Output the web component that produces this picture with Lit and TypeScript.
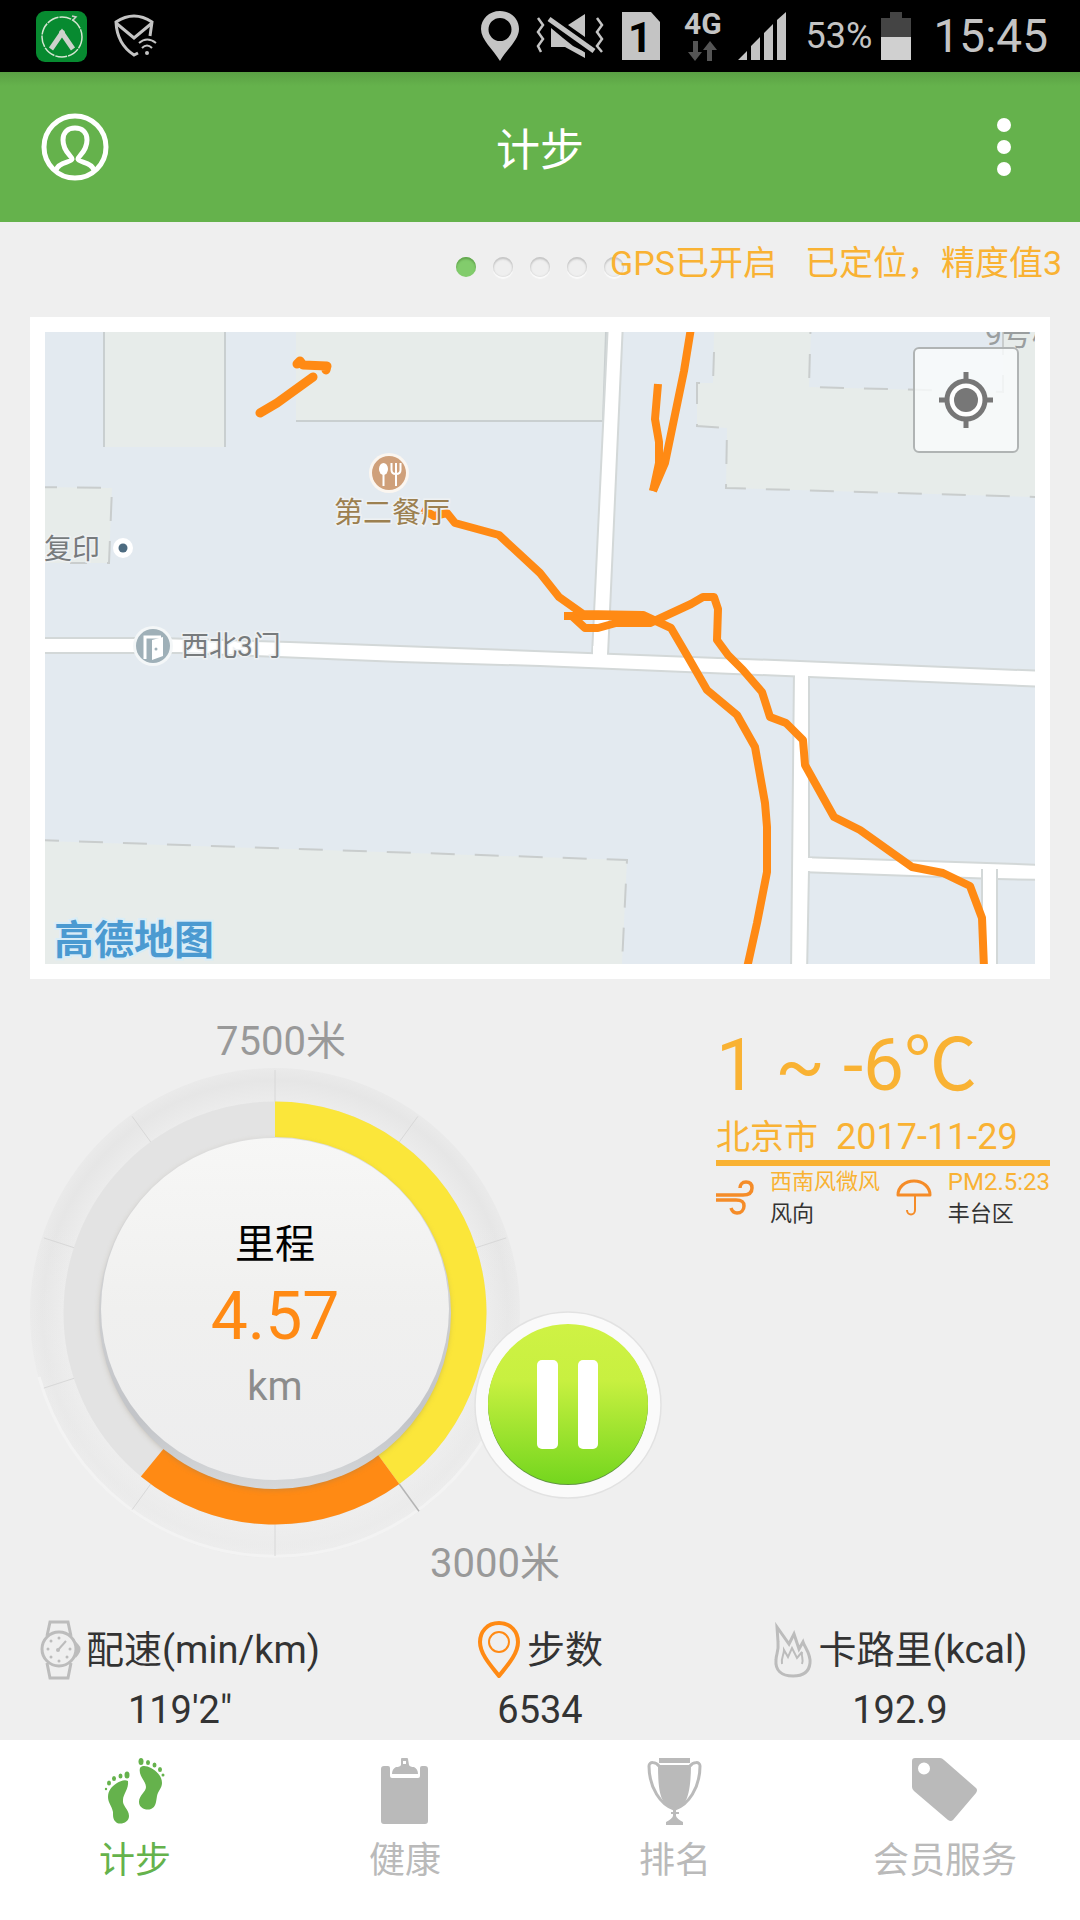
import { LitElement, html, svg, css } from "lit";
import { customElement, property, state } from "lit/decorators.js";
import { classMap } from "lit/directives/class-map.js";

/* Street map with the recorded walking route. */
@customElement("route-map")
class RouteMap extends LitElement {
  static styles = css`
    :host {
      display: block;
      position: relative;
    }
    .canvas {
      display: block;
      width: 100%;
      height: auto;
    }
    .land { fill: #e3eaf0; }
    .plot { fill: #e7ecea; }
    .edge { fill: none; stroke: #c9cfd0; stroke-width: 2; }
    .dashed { fill: none; stroke: #c9cdcd; stroke-width: 2; stroke-dasharray: 24 20; }
    .road { fill: #fff; stroke: #d3d8d8; stroke-width: 2; }
    .join { fill: #fff; }
    .track {
      fill: none;
      stroke: #ff8a14;
      stroke-width: 8;
      stroke-linejoin: round;
    }
    .blob { stroke-width: 9; stroke-linecap: round; }
    .label {
      font-size: 28px;
      fill: #777b7d;
      stroke: #eef1f3;
      stroke-width: 3;
      paint-order: stroke;
    }
    .food { font-size: 29px; fill: #9c8050; }
    .thin { font-size: 30px; stroke: none; fill: #9a9e9f; }
    .brand {
      font-size: 40px;
      font-weight: 700;
      fill: #4b9ad1;
      stroke: #d8edf8;
      stroke-width: 4;
      paint-order: stroke;
    }
    .locate {
      position: absolute;
      top: 15px;
      right: 16px;
      width: 106px;
      height: 106px;
      padding: 0;
      display: grid;
      place-items: center;
      background: rgba(250, 253, 252, 0.8);
      border: 2px solid #b0b4b4;
      border-radius: 6px;
    }
  `;

  render() {
    return html`
      <svg class="canvas" viewBox="45 332 990 632" role="img" aria-label="路线地图">
        <rect class="land" x="45" y="332" width="990" height="632"></rect>
        <rect class="plot" x="104" y="332" width="121" height="115"></rect>
        <path class="edge" d="M104 332V447M225 332V447"></path>
        <path class="plot" d="M296 332H606L603 421H296z"></path>
        <path class="edge" d="M296 421H603L606 332"></path>
        <path class="plot" d="M45 487L112 488L109 563L45 563z"></path>
        <path class="dashed" d="M33 487L112 488L109 563L70 563"></path>
        <path class="plot" d="M45 841L627 860L622 964H45z"></path>
        <path class="dashed" d="M35 840L627 860L622 964"></path>
        <path class="plot" d="M714 332L713 383H697V426L727 428L726 488L1035 497V332z"></path>
        <path class="land" d="M811 332L809 387L1003 392V332z"></path>
        <path class="dashed" d="M714 352L713 383H697V426L727 428L726 488L1035 497"></path>
        <path class="dashed" d="M811 310L809 387L1003 392V332"></path>

        <path class="road" d="M608 322H623L608 655H592z"></path>
        <path class="road" d="M800 857L1045 865V880L997 879L800 872z"></path>
        <path class="road" d="M982 870H997V974H982z"></path>
        <path class="road" d="M794 670H809V870L807 974H791z"></path>
        <path
          class="road"
          d="M35 638L160 638L290 642L588 653L800 661L1045 671V687L809 677L540 666L400 662L180 653H35z"
        ></path>
        <path class="join" d="M593 646H607V660H593zM795 670H808V684H795zM800 858H812V871H800zM983 866H996V884H983z"></path>

        <path class="track blob" d="M297 364L300 361L303 365L327 366L326 370"></path>
        <path class="track blob" d="M313 377L277 403L260 413"></path>
        <path class="track" d="M658 384L655 419L659 442V463L653 491"></path>
        <path class="track" d="M653 491L665 463L678 400L684 371L691 328"></path>
        <path class="track" d="M422 509L434 516L447 513L455 523L499 535L540 573L559 597L583 614L643 615L671 628L688 657L707 690L737 715L755 747L765 803L767 827V872L757 923L747 968"></path>
        <path class="track" d="M564 616H640L652 621"></path>
        <path class="track" d="M573 617L585 628H598L616 623H650L691 604L703 597H714L718 609L717 640L728 655L743 670L762 692L770 717L786 723L803 740L805 765L834 817L860 830L912 867L943 873L970 886L982 918L984 968"></path>

        <circle cx="389" cy="473" r="20" fill="#fbf6f0"></circle>
        <circle cx="389" cy="473" r="17" fill="#cfa07a"></circle>
        <path
          d="M383.500 474V486M396 473V486M391.500 463V470Q391.500 474 396 474Q400.500 474 400.500 470V463M396 463V473"
          fill="none" stroke="#fff" stroke-width="2"
        ></path>
        <ellipse cx="383.500" cy="469" rx="4.500" ry="6" fill="#fff"></ellipse>

        <circle cx="123" cy="548" r="10" fill="#fff"></circle>
        <circle cx="123" cy="548" r="4.500" fill="#4d6b80"></circle>

        <circle cx="153" cy="646" r="20" fill="#f4f7f8"></circle>
        <circle cx="153" cy="646" r="17" fill="#9fb0b8"></circle>
        <path d="M145 659V637H161" fill="none" stroke="#fff" stroke-width="3"></path>
        <path d="M152 640L163 637V656L152 660z" fill="#fff"></path>
        <circle cx="156" cy="649" r="1.500" fill="#9fb0b8"></circle>

        <text class="label food" x="334" y="523">第二餐厅</text>
        <text class="label" x="44" y="559">复印</text>
        <text class="label" x="181" y="656">西北3门</text>
        <text class="label thin" x="985" y="345">9号楼</text>
        <text class="brand" x="54" y="954">高德地图</text>
      </svg>
      <button class="locate" type="button" aria-label="定位">
        <svg width="56" height="56" viewBox="0 0 56 56">
          <path d="M28 0V10M28 46V56M1 28H10M46 28H55" stroke="#777" stroke-width="5"></path>
          <circle cx="28" cy="28" r="19" fill="#fff" stroke="#777" stroke-width="5"></circle>
          <circle cx="28" cy="28" r="12" fill="#777"></circle>
        </svg>
      </button>
    `;
  }
}

/* Circular distance gauge, one full turn being the daily goal. */
@customElement("distance-dial")
class DistanceDial extends LitElement {
  @property({ type: Number }) distance = 0;
  @property({ type: Number }) goal = 7500;
  @property({ type: Number }) mark = 3000;

  static styles = css`
    :host { display: block; }
    .goal {
      padding: 40px 0 2px 12px;
      font-size: 40px;
      line-height: 46px;
      text-align: center;
      color: #999;
    }
    .dial {
      position: relative;
      display: grid;
      place-items: center;
      width: 488px;
    }
    .face, .readout { grid-area: 1 / 1; }
    .face { display: block; width: 100%; height: auto; overflow: visible; }
    .readout {
      display: flex;
      flex-direction: column;
      align-items: center;
      padding-top: 8px;
      font-size: 40px;
      line-height: 64px;
    }
    .name { color: #000; }
    .value { font-size: 66px; line-height: 80px; color: #ff8a14; }
    .unit { color: #8c8c8c; line-height: 60px; }
    .mark {
      position: absolute;
      left: 399px;
      bottom: -32px;
      font-size: 40px;
      line-height: 46px;
      white-space: nowrap;
      color: #999;
    }
    .pause {
      position: absolute;
      left: 443px;
      top: 244px;
      width: 188px;
      height: 188px;
      padding: 0;
      border: 0;
      border-radius: 50%;
      background: none;
    }
    .disc { display: block; }
  `;

  private point(deg: number, r: number) {
    const a = (deg * Math.PI) / 180;
    return `${244 + r * Math.sin(a)} ${246 - r * Math.cos(a)}`;
  }

  private arc(from: number, to: number) {
    const large = to - from > 180 ? 1 : 0;
    return `M${this.point(from, 191)}A191 191 0 ${large} 1 ${this.point(to, 191)}`;
  }

  render() {
    const split = (this.mark / this.goal) * 360;
    const end = ((this.distance * 1000) / this.goal) * 360;
    const ticks = [0, 36, 72, 180, 216, 252, 288, 324];
    return html`
      <div class="goal">${this.goal}米</div>
      <div class="dial">
        <svg class="face" viewBox="0 0 488 488">
          <defs>
            <radialGradient id="rim">
              <stop offset="0.860" stop-color="#ececec"></stop>
              <stop offset="0.950" stop-color="#e6e6e6"></stop>
              <stop offset="1" stop-color="#eaeaea"></stop>
            </radialGradient>
            <linearGradient id="fade" x1="0" y1="0" x2="0" y2="1">
              <stop offset="0.300" stop-color="#f0f0f0" stop-opacity="0"></stop>
              <stop offset="1" stop-color="#f0f0f0" stop-opacity="0.600"></stop>
            </linearGradient>
            <linearGradient id="cap" x1="0" y1="0" x2="0" y2="1">
              <stop offset="0" stop-color="#f7f7f6"></stop>
              <stop offset="0.500" stop-color="#f0f0ef"></stop>
              <stop offset="1" stop-color="#ededee"></stop>
            </linearGradient>
            <linearGradient id="bevel" x1="0" y1="0" x2="0" y2="1">
              <stop offset="0" stop-color="#dedede"></stop>
              <stop offset="0.800" stop-color="#c2c4c8"></stop>
              <stop offset="1" stop-color="#d6d8da"></stop>
            </linearGradient>
            <filter id="soft" x="-10%" y="-10%" width="120%" height="120%">
              <feGaussianBlur stdDeviation="3"></feGaussianBlur>
            </filter>
          </defs>
          <circle cx="244" cy="246" r="245" fill="url(#rim)"></circle>
          <circle cx="244" cy="246" r="245" fill="url(#fade)"></circle>
          <path d="M8 310A245 245 0 0 0 480 310" fill="none" stroke="#f3f3f3" stroke-width="3"></path>
          ${ticks.map(
            (t) => svg`<path d="M${this.point(t, 211)}L${this.point(t, 243)}" stroke="#d8d8d8" stroke-width="1"></path>`
          )}
          <path d="M${this.point(split, 211)}L${this.point(split, 245)}" stroke="#b4b4b4" stroke-width="1.500"></path>
          <circle cx="244" cy="246" r="191" fill="none" stroke="#e3e3e3" stroke-width="41"></circle>
          <path d=${this.arc(0, split)} fill="none" stroke="#fbe63a" stroke-width="41"></path>
          <path d=${this.arc(split, end)} fill="none" stroke="#ff8a14" stroke-width="41"></path>
          <circle cx="244" cy="248" r="174" fill="#8a7a60" opacity="0.500" filter="url(#soft)"></circle>
          <circle cx="244" cy="246" r="176" fill="url(#bevel)"></circle>
          <ellipse cx="244" cy="242" rx="174" ry="171" fill="url(#cap)"></ellipse>
        </svg>
        <div class="readout">
          <span class="name">里程</span>
          <span class="value">${this.distance}</span>
          <span class="unit">km</span>
        </div>
        <span class="mark">${this.mark}米</span>
        <button class="pause" type="button" aria-label="暂停">
          <svg class="disc" width="188" height="188" viewBox="0 0 188 188">
            <defs>
              <linearGradient id="lime" x1="0" y1="0" x2="0" y2="1">
                <stop offset="0" stop-color="#cff244"></stop>
                <stop offset="0.350" stop-color="#c8f040"></stop>
                <stop offset="1" stop-color="#74d61e"></stop>
              </linearGradient>
            </defs>
            <circle cx="94" cy="94" r="93" fill="#fafafa" stroke="#e2e2e2" stroke-width="1.500"></circle>
            <circle cx="94" cy="94" r="80" fill="#5f9440"></circle>
            <circle cx="94" cy="93" r="80" fill="url(#lime)"></circle>
            <rect x="63" y="49" width="21" height="89" rx="5" fill="#fff"></rect>
            <rect x="104" y="49" width="20" height="89" rx="5" fill="#fff"></rect>
          </svg>
        </button>
      </div>
    `;
  }
}

/* Temperature, city, date, wind and air quality. */
@customElement("weather-panel")
class WeatherPanel extends LitElement {
  static styles = css`
    :host {
      display: block;
      width: 334px;
      padding-top: 44px;
      color: #f9b233;
    }
    .temp { font-size: 73px; line-height: 84px; white-space: nowrap; }
    .place {
      display: flex;
      gap: 18px;
      margin-top: 7px;
      font-size: 36px;
      line-height: 46px;
      border-bottom: 6px solid #f9b233;
    }
    .city { font-size: 34px; }
    .facts { display: flex; justify-content: space-between; }
    .fact { display: flex; align-items: center; gap: 16px; }
    .text {
      display: flex;
      flex-direction: column;
      font-size: 22px;
      line-height: 32px;
      white-space: nowrap;
    }
    .number { font-size: 24px; }
    .what { color: #333; }
  `;

  render() {
    return html`
      <div class="temp">1 ~ -6℃</div>
      <div class="place"><span class="city">北京市</span><time datetime="2017-11-29">2017-11-29</time></div>
      <div class="facts">
        <div class="fact">
          <svg width="38" height="36" viewBox="0 0 38 36" fill="none" stroke="#f58c28" stroke-width="3.500">
            <path d="M0 15H27C34 15 36 12 36 8C36 4 34 2 30 2C26 2 24 5 24 8"></path>
            <path d="M0 20H20C26 20 28 22 28 26C28 30 25 33 21 33C18 33 16 31 15 28"></path>
          </svg>
          <div class="text"><span>西南风微风</span><span class="what">风向</span></div>
        </div>
        <div class="fact">
          <svg width="36" height="38" viewBox="0 0 36 38" fill="none" stroke="#f58c28">
            <path d="M2 16C2 8 9 2 18 2S34 8 34 16z" stroke-width="3" stroke-linejoin="round"></path>
            <path d="M19 16V31C19 37 11 37 11 31" stroke-width="2"></path>
          </svg>
          <div class="text"><span class="number">PM2.5:23</span><span class="what">丰台区</span></div>
        </div>
      </div>
    `;
  }
}

const watchIcon = html`<svg width="42" height="60" viewBox="0 0 42 60" fill="none" stroke="#bcbcbc" stroke-width="3">
  <path d="M7 16L10 2H28L31 16M7 43L10 58H28L31 43"></path>
  <circle cx="19" cy="29" r="17"></circle>
  <path d="M37 25Q41 29 37 34z" fill="#bcbcbc"></path>
  <path d="M18 30L26 21" stroke-width="2"></path>
  <g fill="#bcbcbc" stroke="none">
    <circle cx="19" cy="18" r="1.500"></circle><circle cx="19" cy="41" r="1.500"></circle>
    <circle cx="8" cy="29" r="1.500"></circle><circle cx="30" cy="29" r="1.500"></circle>
    <circle cx="11" cy="21" r="1.500"></circle><circle cx="11" cy="37" r="1.500"></circle>
    <circle cx="27" cy="37" r="1.500"></circle><circle cx="18" cy="30" r="2"></circle>
  </g>
</svg>`;

const pinIcon = html`<svg width="46" height="60" viewBox="0 0 46 60" fill="none" stroke="#ff8a14">
  <path d="M22 3C10 3 3 12 3 22C3 35 16 48 22 56C28 48 41 35 41 22C41 12 34 3 22 3z" stroke-width="4" stroke-linejoin="round"></path>
  <circle cx="22" cy="22" r="10" stroke-width="2"></circle>
</svg>`;

const flameIcon = html`<svg width="42" height="60" viewBox="0 0 42 60" fill="none" stroke="#bcbcbc" stroke-linejoin="miter">
  <path d="M4 7L16 24L21 14L26 29L30 22C32 28 38 34 37 43C36 53 28 56 20 56C8 56 2 50 3 40C3 34 6 32 5 22z" stroke-width="3"></path>
  <path d="M9 44C8 37 11 35 11 30L15 37L19 28L24 38L29 32C28 37 31 39 29 44" stroke-width="2"></path>
</svg>`;

const feetIcon = html`<svg width="62" height="67" viewBox="0 0 62 67" fill="currentColor">
  <path d="M24 23C21 21 16 23 13 25C7 29 4 33 4 39C4 45 8 48 9 54C9 59 9 62 13 65C18 67 25 64 25 58C25 51 18 48 19 42C19 36 25 31 24 23z"></path>
  <ellipse cx="23" cy="17" rx="2.500" ry="3.500"></ellipse><ellipse cx="16.500" cy="18" rx="2" ry="2.500"></ellipse>
  <ellipse cx="10" cy="20.500" rx="2" ry="2.500"></ellipse><ellipse cx="5" cy="25" rx="2" ry="2.500"></ellipse><circle cx="2" cy="31" r="1.200"></circle>
  <path d="M36 10C38 7 43 8 47 10C54 14 58 19 58 25C58 30 54 33 53 38C52 44 52 49 47 51C42 53 35 50 35 44C35 37 42 34 42 29C42 23 34 18 36 10z"></path>
  <ellipse cx="37" cy="3.500" rx="2.500" ry="3.500"></ellipse><ellipse cx="44" cy="4.500" rx="2" ry="2.500"></ellipse>
  <ellipse cx="50.500" cy="7" rx="2" ry="2.500"></ellipse><ellipse cx="56" cy="11.500" rx="2" ry="2.500"></ellipse><circle cx="59" cy="17" r="1.500"></circle>
</svg>`;

const boardIcon = html`<svg width="48" height="67" viewBox="0 0 48 67" fill="currentColor">
  <path d="M3 8H7Q9 8 9 10V18Q9 20 11 20H37Q39 20 39 18V10Q39 8 41 8H44Q47 8 47 11V63Q47 66 44 66H3Q0 66 0 63V11Q0 8 3 8z"></path>
  <path fill-rule="evenodd" d="M20 1Q20 0 21 0H26Q27 0 27 1L28 7Q29 9 33 9Q37 11 37 16H11Q11 11 15 9Q19 9 20 7zM22 3V6H25V3z"></path>
</svg>`;

const cupIcon = html`<svg width="56" height="67" viewBox="0 0 56 67" fill="currentColor">
  <path d="M12 0H43V5H12zM11 7H44C44 24 42 38 38 44Q33 50 29 51V58H26V51Q20 48 17 44C12 38 11 24 11 7z"></path>
  <path d="M12 8C9 4 2 3 2 8C2 30 14 47 27 51M43 8C46 4 53 3 53 8C53 30 41 47 28 51" fill="none" stroke="currentColor" stroke-width="3"></path>
  <path d="M24 54H32V56H24zM26 58H29Q30 61 36 64V67H19V64Q25 61 26 58z"></path>
</svg>`;

const tagIcon = html`<svg width="66" height="67" viewBox="0 0 66 67" fill="currentColor">
  <path fill-rule="evenodd" d="M3 0H28Q30 0 32 2L64 30Q66 32 64 35L41 62Q39 64 36 62L2 33Q0 31 0 29V3Q0 0 3 0zM12 4.500A6 6 0 1 0 12 16.500A6 6 0 1 0 12 4.500z"></path>
</svg>`;

@customElement("app-root")
class AppRoot extends LitElement {
  @state() private tab = 0;
  @state() private page = 0;

  private stats = [
    { icon: watchIcon, name: "配速(min/km)", value: "119'2\"" },
    { icon: pinIcon, name: "步数", value: "6534" },
    { icon: flameIcon, name: "卡路里(kcal)", value: "192.9" },
  ];

  private tabs = [
    { icon: feetIcon, name: "计步" },
    { icon: boardIcon, name: "健康" },
    { icon: cupIcon, name: "排名" },
    { icon: tagIcon, name: "会员服务" },
  ];

  static styles = css`
    :host {
      display: flex;
      flex-direction: column;
      min-height: 100vh;
      background: #efefef;
      font-family: Roboto, "Noto Sans CJK SC", sans-serif;
      color: #333;
    }
    .status {
      display: flex;
      align-items: center;
      gap: 16px;
      height: 72px;
      padding: 0 32px 0 36px;
      background: #000;
      color: #c4c4c4;
    }
    .notes { display: flex; align-items: center; gap: 27px; margin-right: auto; }
    .net {
      display: flex;
      flex-direction: column;
      align-items: center;
      gap: 4px;
      margin-left: 8px;
      font-size: 30px;
      line-height: 26px;
      font-weight: 700;
    }
    .power {
      display: flex;
      align-items: center;
      gap: 9px;
      margin-left: 4px;
      font-size: 36px;
    }
    .clock { margin-left: 6px; font-size: 46px; }
    .header {
      display: grid;
      grid-template-columns: 1fr auto 1fr;
      align-items: center;
      height: 150px;
      padding: 0 40px;
      background: linear-gradient(#5aa044, #65b24c 14px);
      color: #fff;
    }
    .title { margin: 0; font-size: 44px; font-weight: 400; }
    .tool {
      padding: 0;
      border: 0;
      background: none;
      color: inherit;
      justify-self: start;
      display: grid;
    }
    .more { justify-self: end; padding: 0 28px; }
    .pager { display: grid; align-items: center; height: 95px; }
    .dots {
      grid-area: 1 / 1;
      justify-self: center;
      display: flex;
      gap: 17px;
      padding-bottom: 6px;
    }
    .dot {
      width: 20px;
      height: 20px;
      padding: 0;
      border: 0;
      border-radius: 50%;
      background: #efefef;
      box-shadow: inset 0 2px 2px #c4c4c4, inset 0 0 2px #ccc, 0 2px 1px #fafafa;
    }
    .on { background: #82cc6c; box-shadow: inset 0 2px 2px #62a44e; }
    .gps {
      grid-area: 1 / 1;
      justify-self: end;
      display: flex;
      gap: 28px;
      padding: 0 18px 14px;
      font-size: 34px;
      line-height: 40px;
      color: #f9b233;
      z-index: 1;
    }
    .card { margin: 0 30px; padding: 15px; background: #fff; }
    .today {
      display: flex;
      justify-content: space-between;
      padding: 0 30px 65px 31px;
    }
    .stats { display: grid; grid-template-columns: repeat(3, 1fr); margin: 0; }
    .stat { display: flex; flex-direction: column; align-items: center; }
    .name {
      display: flex;
      align-items: center;
      gap: 4px;
      height: 60px;
      font-size: 38px;
      line-height: 44px;
      white-space: nowrap;
    }
    .value { margin: 0; font-size: 38px; line-height: 60px; }
    .tabs {
      display: grid;
      grid-template-columns: repeat(4, 1fr);
      min-height: 180px;
      margin-top: auto;
      background: #fff;
    }
    .tab {
      display: flex;
      flex-direction: column;
      align-items: center;
      gap: 12px;
      padding-top: 18px;
      font-size: 36px;
      line-height: 48px;
      color: #bababa;
      text-decoration: none;
    }
    .active { color: #65b24c; }
  `;

  private renderStatus() {
    return html`
      <div class="status">
        <div class="notes">
          <svg width="51" height="51" viewBox="0 0 51 51">
            <rect width="51" height="51" rx="9" fill="#078a30"></rect>
            <circle cx="26" cy="26" r="20" fill="none" stroke="#d5e6d2" stroke-width="1.500" stroke-dasharray="12 1"></circle>
            <path d="M15 38L26 22L37 38" fill="none" stroke="#cdd2cc" stroke-width="5"></path>
            <circle cx="26" cy="22" r="3" fill="#cdd2cc"></circle>
            <path d="M36 5L40 6L37 9" fill="none" stroke="#cdd2cc" stroke-width="1.500"></path>
          </svg>
          <svg width="44" height="44" viewBox="0 0 44 44" fill="none" stroke="#c4c4c4" stroke-width="3">
            <path d="M24 39L20 41Q3 30 2 8Q20 -4 38 8L36 22"></path>
            <path d="M2 9L20 24L38 9"></path>
            <path d="M28 34Q33 29 38 34M25 29Q33 22 42 29" stroke-width="2"></path>
            <circle cx="33" cy="39" r="2" fill="#c4c4c4" stroke="none"></circle>
          </svg>
        </div>
        <svg width="38" height="50" viewBox="0 0 38 50" fill="#c4c4c4">
          <path fill-rule="evenodd" d="M19 0C8 0 0 8 0 18C0 29 12 38 19 50C26 38 38 29 38 18C38 8 30 0 19 0zM19 7A11.500 11.500 0 1 1 19 30A11.500 11.500 0 1 1 19 7z"></path>
        </svg>
        <svg width="71" height="44" viewBox="0 0 71 44" fill="#c4c4c4">
          <path d="M33 11L50 0V23zM16 14L28 24L38 32L50 38V44L30 33H16z"></path>
          <path d="M13 5L59 39" stroke="#000" stroke-width="10"></path>
          <path d="M14 5L59 37" stroke="#c4c4c4" stroke-width="5"></path>
          <path d="M3 4L8 11L3 18L8 25L3 32L6 38M62 4L67 11L62 18L67 25L62 32L67 38" fill="none" stroke="#c4c4c4" stroke-width="2.500"></path>
        </svg>
        <svg width="38" height="48" viewBox="0 0 38 48">
          <path d="M0 0H29L38 10V48H0z" fill="#c4c4c4"></path>
          <text x="18" y="40" text-anchor="middle" font-size="42" font-weight="700" fill="#000">1</text>
        </svg>
        <div class="net">
          <span>4G</span>
          <svg width="30" height="20" viewBox="0 0 30 20" fill="#555">
            <path d="M5 0H10V11H14L7 20L0 11H5zM19 20H24V9H29L22 0L15 9H19z"></path>
          </svg>
        </div>
        <svg width="48" height="48" viewBox="0 0 48 48" fill="#c4c4c4">
          <path d="M0 48L9 39V48zM13 48V34L22 25V48zM26 48V21L35 12V48zM39 48V8L48 0V48z"></path>
        </svg>
        <div class="power">
          <span>53%</span>
          <svg width="30" height="48" viewBox="0 0 30 48">
            <path d="M9 0H21V6H30V25H0V6H9z" fill="#444"></path>
            <path d="M0 25H30V48H0z" fill="#d0d0d0"></path>
          </svg>
        </div>
        <span class="clock">15:45</span>
      </div>
    `;
  }

  render() {
    return html`
      ${this.renderStatus()}
      <header class="header">
        <button class="tool" type="button" aria-label="个人中心">
          <svg width="70" height="70" viewBox="0 0 70 70" fill="none" stroke="#fff" stroke-width="5">
            <circle cx="35" cy="35" r="31"></circle>
            <path d="M16 58C19 49 31 51 32 47C32 44 23 40 23 28C23 20 28 16 35 16S47 20 47 28C47 40 38 44 38 47C39 51 51 49 54 58"></path>
          </svg>
        </button>
        <h1 class="title">计步</h1>
        <button class="tool more" type="button" aria-label="更多">
          <svg width="16" height="60" viewBox="0 0 16 60" fill="#fff">
            <circle cx="8" cy="8" r="7"></circle><circle cx="8" cy="30" r="7"></circle><circle cx="8" cy="52" r="7"></circle>
          </svg>
        </button>
      </header>
      <div class="pager">
        <div class="dots">
          ${[0, 1, 2, 3, 4].map(
            (n) => html`<button
              type="button"
              class=${classMap({ dot: true, on: n === this.page })}
              aria-label=${`第${n + 1}页`}
              @click=${() => (this.page = n)}
            ></button>`
          )}
        </div>
        <div class="gps"><span>GPS已开启</span><span>已定位，精度值3</span></div>
      </div>
      <div class="card"><route-map></route-map></div>
      <section class="today">
        <distance-dial distance="4.57" goal="7500" mark="3000"></distance-dial>
        <weather-panel></weather-panel>
      </section>
      <dl class="stats">
        ${this.stats.map(
          (s) => html`<div class="stat">
            <dt class="name">${s.icon}<span>${s.name}</span></dt>
            <dd class="value">${s.value}</dd>
          </div>`
        )}
      </dl>
      <nav class="tabs">
        ${this.tabs.map(
          (t, n) => html`<a
            href="#"
            class=${classMap({ tab: true, active: n === this.tab })}
            @click=${(e: Event) => {
              e.preventDefault();
              this.tab = n;
            }}
            >${t.icon}<span>${t.name}</span></a
          >`
        )}
      </nav>
    `;
  }
}
